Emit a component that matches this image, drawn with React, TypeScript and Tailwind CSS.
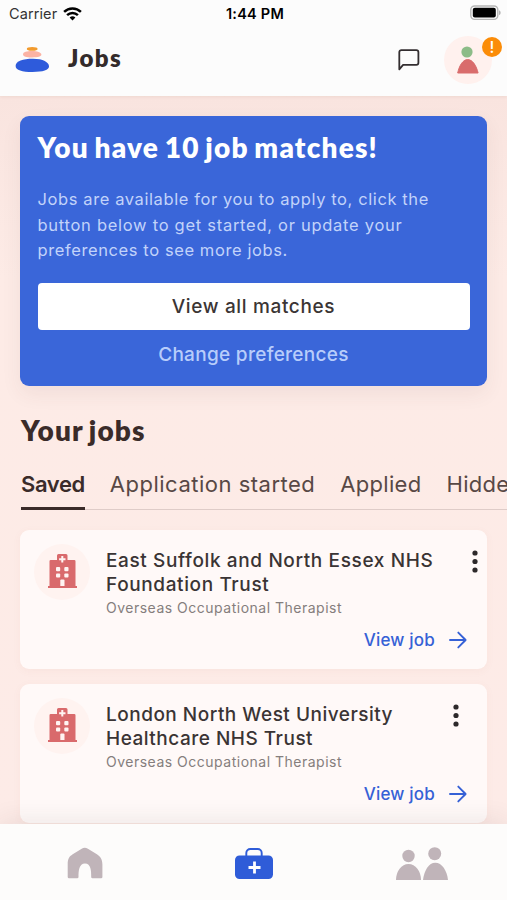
import { useState } from 'react';

interface Job {
  id: number;
  trust: string[];
  role: string;
  menuClass: string;
  titleClass: string;
}

const jobs: Job[] = [
  {
    id: 1,
    trust: ['East Suffolk and North Essex NHS', 'Foundation Trust'],
    role: 'Overseas Occupational Therapist',
    menuClass: 'mr-[9px]',
    titleClass: 'tracking-[0.62px]',
  },
  {
    id: 2,
    trust: ['London North West University', 'Healthcare NHS Trust'],
    role: 'Overseas Occupational Therapist',
    menuClass: 'mr-[28px]',
    titleClass: 'tracking-[0.5px]',
  },
];

const tabs = [
  { label: 'Saved', className: 'tracking-[-0.4px]' },
  { label: 'Application started', className: 'tracking-[0.5px]' },
  { label: 'Applied', className: 'tracking-[0.3px]' },
  { label: 'Hidden', className: 'tracking-[0.3px]' },
];

function StatusBar() {
  return (
    <div className="grid h-7 grid-cols-3 items-center pl-[9px] pr-[6px] text-black">
      <div className="flex items-center gap-[6px]">
        <span className="text-[14.5px] leading-none tracking-[0.1px] text-[#333]">Carrier</span>
        <svg width="19" height="14" viewBox="0 0 19 14" fill="none" stroke="currentColor" strokeWidth="2.5">
          <path d="M1.1 4.9a12 12 0 0 1 16.8 0" />
          <path d="M4.1 8.2a7.8 7.8 0 0 1 10.8 0" />
          <path d="M9.5 13.6 6.6 10.6a4.2 4.2 0 0 1 5.8 0Z" fill="currentColor" stroke="none" />
        </svg>
      </div>
      <span className="text-center text-[14.5px] font-semibold leading-none tracking-[0.25px]">1:44 PM</span>
      <svg className="-mt-[2px] justify-self-end" width="31" height="16" viewBox="0 0 31 16">
        <rect x="0.8" y="1" width="27" height="13.4" rx="3.8" fill="#fdfdfd" stroke="#b5b5b5" strokeWidth="1.4" />
        <rect x="2.8" y="2.8" width="23" height="9.8" rx="2" fill="#000" />
        <path d="M29 5.3c2.2.8 2.2 4 0 4.8Z" fill="#b5b5b5" />
      </svg>
    </div>
  );
}

function Logo() {
  return (
    <svg width="34" height="26" viewBox="0 0 34 26">
      <ellipse cx="17.2" cy="1.9" rx="5.4" ry="1.8" fill="#f29b2e" />
      <path d="M8 7.2C8 5 12 3.9 17 3.9s9.400 1.500 9.400 3.600-3.400 2.900-9.400 2.900S8 9.600 8 7.200Z" fill="#fbb3a4" />
      <path d="M.6 19C.6 14 8 11.700 18 11.700S34 15.200 34 19.300c0 4-6 5.700-16.500 5.700S.6 23.200.6 19Z" fill="#2e5bdb" />
    </svg>
  );
}

function Header() {
  return (
    <header className="relative z-10 h-24 shrink-0 bg-[#fcfcfc] shadow-[0_1px_3px_rgba(120,60,40,0.08)]">
      <StatusBar />
      <div className="flex h-[64px] items-center pl-[15px] pr-[15px]">
        <Logo />
        <h1 className="-mt-[4px] ml-[19px] font-[Lato] text-[24px] font-extrabold leading-none tracking-[1.4px] text-[#332b2b]">
          Jobs
        </h1>
        <button className="ml-auto" aria-label="Messages">
          <svg width="22" height="22" viewBox="0 0 22 22" fill="none" stroke="#332e30" strokeWidth="1.8" strokeLinejoin="round">
            <path d="M1.300 20.300V3.200a2.100 2.100 0 0 1 2.100-2.100h14.900a2.100 2.100 0 0 1 2.100 2.100v10.500a2.100 2.100 0 0 1-2.100 2.100H5.100Z" />
          </svg>
        </button>
        <button className="relative ml-[24px] h-12 w-12 rounded-full bg-[#fff1ee]" aria-label="Profile">
          <svg width="48" height="48" viewBox="0 0 48 48">
            <circle cx="23" cy="16" r="5.600" fill="#8cbc88" />
            <path d="M13.700 37c1.500-7 4.900-13.400 10-13.400S32.400 30 34.100 37Z" fill="#d96c6c" stroke="#d96c6c" strokeLinejoin="round" />
          </svg>
          <span className="absolute -right-[10px] top-[1px] flex h-5 w-5 items-center justify-center rounded-full bg-[#fb8c08] text-[16px] font-medium leading-none text-white">
            !
          </span>
        </button>
      </div>
    </header>
  );
}

function MatchesCard() {
  return (
    <section className="mx-5 mt-5 flex h-[270px] flex-col rounded-[9px] bg-[#3a66d9] px-[17.500px] shadow-[0_8px_20px_rgba(90,60,60,0.07)]">
      <h2 className="mt-[14px] whitespace-nowrap font-[Lato] text-[28px] font-extrabold leading-[34px] tracking-[1.2px] [word-spacing:-2px] text-white">
        You have 10 job matches!
      </h2>
      <p className="mt-[23px] whitespace-nowrap text-[16.5px] leading-[25.5px] text-[#c2d3fa]">
        <span className="block tracking-[0.6px]">Jobs are available for you to apply to, click the</span>
        <span className="block tracking-[0.72px]">button below to get started, or update your</span>
        <span className="block tracking-[0.6px]">preferences to see more jobs.</span>
      </p>
      <button className="mt-[19px] h-[47px] shrink-0 rounded-[4px] bg-white pt-[2px] text-[19px] font-medium tracking-[0.65px] text-[#3b3534]">
        View all matches
      </button>
      <button className="mt-[12px] text-[19px] font-medium leading-[26px] tracking-[0.3px] text-[#b8cdfb]">
        Change preferences
      </button>
    </section>
  );
}

function HospitalIcon() {
  return (
    <svg className="shrink-0" width="58" height="58" viewBox="0 0 58 58">
      <circle cx="29" cy="29" r="28" fill="#fff3f0" />
      <path
        d="M24 12.500a1.500 1.500 0 0 1 1.500-1.500h7.500a1.500 1.500 0 0 1 1.500 1.500V17h6.800a1.200 1.200 0 0 1 1.200 1.200V43H44v2H15v-2h1.500V18.200a1.200 1.200 0 0 1 1.200-1.200H24Z"
        fill="#d96a6c"
      />
      <g fill="#fff4f2">
        <path d="M28.300 13h2v2.200h2.200v2h-2.200v2.200h-2v-2.200h-2.200v-2h2.200Z" />
        <rect x="23" y="24" width="4.200" height="4.200" rx="1" />
        <rect x="31.300" y="24" width="4.200" height="4.200" rx="1" />
        <rect x="23" y="30.400" width="4.200" height="4.200" rx="1" />
        <rect x="31.300" y="30.400" width="4.200" height="4.200" rx="1" />
        <path d="M27.300 37.600a1 1 0 0 1 1-1h2.200a1 1 0 0 1 1 1V43h-4.200Z" />
      </g>
    </svg>
  );
}

function JobCard({ job }: { job: Job }) {
  return (
    <article className="flex h-[139px] shrink-0 rounded-[9px] bg-[#fff9f8] pl-[13px] pt-[13px] shadow-[0_2px_8px_rgba(180,100,80,0.05)]">
      <HospitalIcon />
      <div className="ml-[15px] flex flex-1 flex-col">
        <div className="flex h-[56px] justify-between pt-[6px]">
          <h3 className={`${job.titleClass} whitespace-nowrap text-[19px] font-medium leading-[24px] text-[#3a3434]`}>
            {job.trust.map(line => (
              <span key={line} className="block">
                {line}
              </span>
            ))}
          </h3>
          <button className={`${job.menuClass} h-6`} aria-label="More options">
            <svg width="6" height="24" viewBox="0 0 6 24" fill="#2d292a">
              <circle cx="3" cy="4" r="2.600" />
              <circle cx="3" cy="12.500" r="2.600" />
              <circle cx="3" cy="21" r="2.600" />
            </svg>
          </button>
        </div>
        <p className="whitespace-nowrap text-[14px] leading-[18px] tracking-[0.5px] text-[#857e7d]">{job.role}</p>
        <a href="#" className="mt-[13px] mr-[20px] flex items-center self-end text-[17px] font-medium leading-5 tracking-[0.2px] text-[#3661d6]">
          View job
          <svg className="ml-[14px]" width="18" height="18" viewBox="0 0 18 18" fill="none" stroke="currentColor" strokeWidth="1.900" strokeLinecap="round" strokeLinejoin="round">
            <path d="M1 9h15.500M9.300 1.600 16.600 9l-7.300 7.400" />
          </svg>
        </a>
      </div>
    </article>
  );
}

function BottomNav() {
  return (
    <nav className="relative z-10 flex h-[76px] shrink-0 items-start bg-[#fdfcfb] pl-[67px] pt-[23px] shadow-[0_-3px_24px_rgba(60,40,40,0.09)]">
      <a href="#" aria-label="Home">
        <svg width="36" height="34" viewBox="0 0 36 34" fill="#c0b4b9">
          <path d="M.7 17.500c0-5.400 1.300-7.800 5-10.200l9-5.600q3-1.700 6.200 0l9 5.600c3.800 2.400 5.500 5.500 5.500 10.200V30a1.300 1.300 0 0 1-1.300 1.300H25.500a1.300 1.300 0 0 1-1.300-1.300c0-6-.2-13.500-6.200-13.500S11.500 24 11.500 30a1.300 1.300 0 0 1-1.300 1.300H2A1.300 1.300 0 0 1 .7 30Z" />
        </svg>
      </a>
      <a href="#" className="ml-[131px]" aria-label="Jobs">
        <svg width="40" height="34" viewBox="0 0 40 34">
          <path d="M12.300 9V6a4 4 0 0 1 4-4h7.400a4 4 0 0 1 4 4V9" fill="none" stroke="#2f5cd8" strokeWidth="1.900" />
          <rect x="1" y="8.500" width="38" height="23.500" rx="4.500" fill="#2f5cd8" />
          <path d="M20.500 14.500v12M14.500 20.500h12" stroke="#fff" strokeWidth="2.800" />
        </svg>
      </a>
      <a href="#" className="ml-[121px]" aria-label="Community">
        <svg width="54" height="36" viewBox="0 0 54 36" fill="#c0b4b9">
          <circle cx="13.500" cy="9" r="6.200" />
          <path d="M1 33c0-9 5.500-16 12.500-16S26 24 26 33Z" />
          <circle cx="39.700" cy="6.700" r="6.500" />
          <path d="M28 33c1.200-9.500 5.700-17.300 12.300-17.300S52 23.500 53 33Z" />
        </svg>
      </a>
    </nav>
  );
}

export default function App() {
  const [activeTab, setActiveTab] = useState('Saved');

  return (
    <div className="flex h-[900px] w-full flex-col overflow-hidden bg-[#fdebe6] font-[Inter]">
      <Header />
      <main className="flex min-h-0 flex-1 flex-col overflow-hidden bg-linear-to-b from-[#f9e4df] via-[#fdebe6] via-25% to-[#fdebe7]">
        <MatchesCard />

        <h2 className="ml-[21px] mt-[27px] whitespace-nowrap font-[Lato] text-[28px] font-extrabold leading-[34px] tracking-[1.1px] [word-spacing:-2px] text-[#3a2b29]">
          Your jobs
        </h2>

        {/* Tabs run off the right edge */}
        <div className="ml-[21px] mt-[18px] flex h-[45px] shrink-0 gap-[25px] border-b border-[#dfccc8] text-[22px] leading-[38px]">
          {tabs.map(({ label, className }) => (
            <button
              key={label}
              onClick={() => setActiveTab(label)}
              className={`${className} -mb-px flex h-[45px] shrink-0 items-start whitespace-nowrap border-b-[3px] ${
                activeTab === label
                  ? 'border-[#3a2b29] font-semibold text-[#3a2b29]'
                  : 'border-transparent text-[#584845]'
              }`}
            >
              {label}
            </button>
          ))}
        </div>

        <div className="mx-5 mt-[20px] flex flex-col gap-[15px]">
          {jobs.map(job => (
            <JobCard key={job.id} job={job} />
          ))}
        </div>
      </main>
      <BottomNav />
    </div>
  );
}
